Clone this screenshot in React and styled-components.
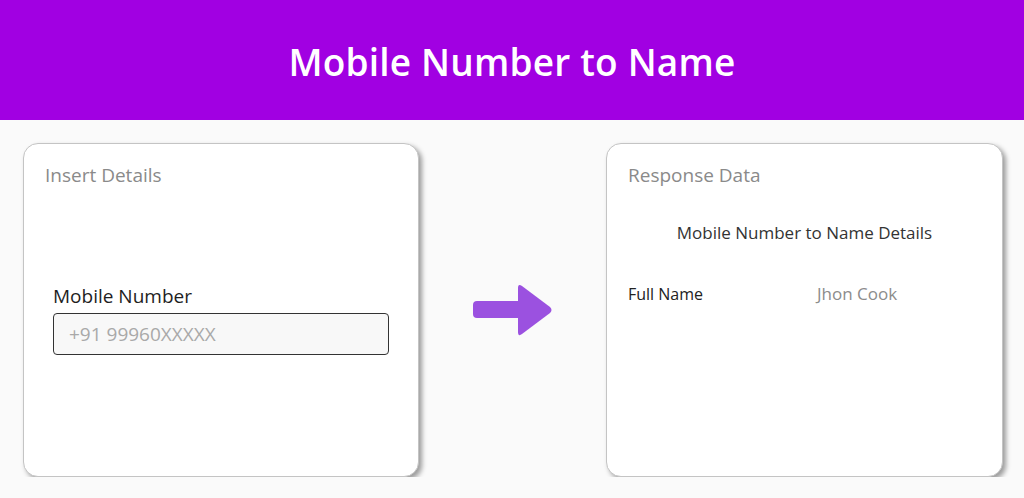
import styled, { createGlobalStyle } from 'styled-components';

const GlobalStyle = createGlobalStyle`
  body {
    margin: 0;
    background: #fafafa;
    font-family: "Open Sans", "Liberation Sans", sans-serif;
  }
`;

const Header = styled.header`
  height: 120px;
  background: #a100e2;
  display: flex;
  align-items: center;
  justify-content: center;
`;

const Title = styled.h1`
  margin: 2px 0 0;
  color: #fff;
  font-size: 37px;
  font-weight: 600;
  letter-spacing: 0.2px;
`;

const Main = styled.main`
  display: grid;
  grid-template-columns: 396px 1fr 397px;
  padding: 23px 21px 0 23px;
`;

const Card = styled.section`
  box-sizing: border-box;
  height: 334px;
  background: #fff;
  border: 1px solid #c4c4c4;
  border-radius: 15px;
  box-shadow: 3px 3px 5px rgba(0, 0, 0, 0.38);
  padding: 19px 21px;
  display: flex;
  flex-direction: column;
`;

const CardTitle = styled.h2`
  margin: 0;
  font-size: 19px;
  font-weight: 400;
  color: #8a8a8a;
  line-height: 24px;
`;

const Field = styled.div`
  margin: 96px 8px 0 8px;
  display: flex;
  flex-direction: column;
  gap: 4px;
`;

const Label = styled.label`
  font-size: 19px;
  font-weight: 500;
  color: #1e1e1e;
`;

const Input = styled.input`
  box-sizing: border-box;
  height: 42px;
  border: 1px solid #333;
  border-radius: 4px;
  background: #f8f8f8;
  padding: 0 15px;
  font-family: inherit;
  font-size: 19px;
  outline: none;

  &::placeholder {
    color: #a9a9a9;
  }
`;

const ArrowBox = styled.div`
  display: flex;
  align-items: center;
  justify-content: center;
`;

const Subtitle = styled.h3`
  margin: 34px 0 0;
  text-align: center;
  font-size: 17px;
  font-weight: 400;
  color: #333;
`;

const Row = styled.div`
  margin-top: 38px;
  display: grid;
  grid-template-columns: 189px 1fr;
  align-items: center;
`;

const Key = styled.span`
  font-size: 16px;
  color: #222;
`;

const Value = styled.span`
  font-size: 17px;
  color: #8c8c8c;
`;

const Arrow = () => (
  <svg width="80" height="52" viewBox="0 0 80 52">
    <rect x="0" y="17" width="50" height="17" rx="4" fill="#9b51e0" />
    <path
      d="M45 4 Q45 -1 49 2 L77 23 Q80 26 77 29 L49 50 Q45 53 45 48 Z"
      fill="#9b51e0"
    />
  </svg>
);

const App = () => {
  return (
    <>
      <GlobalStyle />
      <Header>
        <Title>Mobile Number to Name</Title>
      </Header>
      <Main>
        <Card>
          <CardTitle>Insert Details</CardTitle>
          <Field>
            <Label htmlFor="mobile">Mobile Number</Label>
            <Input id="mobile" placeholder="+91 99960XXXXX" />
          </Field>
        </Card>
        <ArrowBox>
          <Arrow />
        </ArrowBox>
        <Card>
          <CardTitle>Response Data</CardTitle>
          <Subtitle>Mobile Number to Name Details</Subtitle>
          <Row>
            <Key>Full Name</Key>
            <Value>Jhon Cook</Value>
          </Row>
        </Card>
      </Main>
    </>
  );
};

export default App;
